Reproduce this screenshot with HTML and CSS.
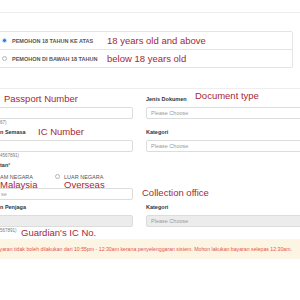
FILE: index.html
```html
<!DOCTYPE html>
<html lang="ms">
<head>
    <meta charset="UTF-8">
    <meta name="viewport" content="width=device-width, initial-scale=1.0">
    <title>Permohonan Pasport</title>
    <link rel="stylesheet" href="styles.css">
</head>

<body>
    <div id="page">
        <div class="topbar"></div>

        <!--jenis pemohon-->
        <div class="choice">
            <label class="opt">
                <span class="radio on"></span>
                <span>PEMOHON 18 TAHUN KE ATAS</span>
                <span class="note">18 years old and above</span>
            </label>
            <label class="opt">
                <span class="radio"></span>
                <span>PEMOHON DI BAWAH 18 TAHUN</span>
                <span class="note">below 18 years old</span>
            </label>
        </div>

        <div class="panel">
            <div class="fields">
                <div class="field left">
                    <label>&nbsp;</label>
                    <div class="input"></div>
                    <div class="hint">67)</div>
                </div>
                <div class="field">
                    <label>Jenis Dokumen</label>
                    <div class="input select">Please Choose</div>
                </div>

                <div class="field left">
                    <label>n Semasa</label>
                    <div class="input"></div>
                    <div class="hint">4567891)</div>
                </div>
                <div class="field">
                    <label>Kategori</label>
                    <div class="input select">Please Choose</div>
                </div>

                <div class="field left place">
                    <label>tan<span class="req">*</span></label>
                    <div class="radios">
                        <span class="ropt first">AM NEGARA</span>
                        <span class="ropt"><span class="radio"></span>LUAR NEGARA</span>
                    </div>
                    <div class="input select">se</div>
                </div>
                <div class="field"></div>

                <div class="field left">
                    <label>n Penjaga</label>
                    <div class="input disabled"></div>
                    <div class="hint">567891)</div>
                </div>
                <div class="field">
                    <label>Kategori</label>
                    <div class="input select disabled">Please Choose</div>
                </div>
            </div>
        </div>

        <div class="alert">
            <span>Pembayaran tidak boleh dilakukan dari 10:55pm - 12:30am kerana penyelenggaran sistem. Mohon lakukan bayaran selepas 12:30am.</span>
        </div>

        <!-- annotations -->
        <span class="note tag passport">Passport Number</span>
        <span class="note tag doctype">Document type</span>
        <span class="note tag icno">IC Number</span>
        <span class="note tag malaysia">Malaysia</span>
        <span class="note tag overseas">Overseas</span>
        <span class="note tag office">Collection office</span>
        <span class="note tag guardian">Guardian's IC No.</span>
    </div>
</body>
</html>
```

FILE: styles.css
```css
body {
    margin: 0;
    background-color: #fff;
    font-family: "Liberation Sans", Arial, sans-serif;
    color: #444;
    overflow: hidden;
}
#page {
    position: relative;
    width: 440px;
}
.topbar {
    height: 12px;
    border-bottom: 1px solid #eee;
}
.choice {
    box-sizing: border-box;
    width: 298px;
    margin: 18px 0 0 -5px;
    border: 1px solid #e4e4e4;
    border-radius: 2px;
}
.opt {
    display: grid;
    grid-template-columns: 5px 90px auto;
    column-gap: 5px;
    align-items: center;
    height: 17px;
    padding-left: 6px;
    font-size: 5.5px;
    font-weight: bold;
    color: #555;
}
.opt + .opt {
    border-top: 1px solid #e4e4e4;
}
.radio {
    display: inline-block;
    box-sizing: border-box;
    width: 5px;
    height: 5px;
    border: 1px solid #b5b5b5;
    border-radius: 50%;
    background-color: #fff;
}
.radio.on {
    border-color: #cfe0f7;
    background-color: #2a7be4;
}
.note {
    font-family: "Liberation Sans", Arial, sans-serif;
    font-size: 9.5px;
    font-weight: normal;
    line-height: 10px;
    color: #a62639;
    white-space: nowrap;
}
.panel {
    margin-top: 20px;
    border-top: 1px solid #eee;
    padding-top: 7px;
}
.fields {
    display: grid;
    grid-template-columns: 133px 281px;
    column-gap: 13px;
    row-gap: 2px;
}
.field label {
    display: block;
    font-size: 5.5px;
    line-height: 7px;
    margin-bottom: 4px;
    color: #333;
    font-weight: bold;
}
.input {
    box-sizing: border-box;
    display: flex;
    align-items: center;
    height: 12px;
    padding: 0 4px;
    border: 1px solid #dcdcdc;
    border-radius: 2px;
    font-size: 5.5px;
    color: #9a9a9a;
    background-color: #fff;
}
.left .input {
    margin-left: -4px;
}
.input.disabled {
    background-color: #ececec;
}
.hint {
    font-size: 4.5px;
    line-height: 8px;
    color: #777;
}
.req {
    color: #d9534f;
}
.place {
    padding-bottom: 2px;
}
.radios {
    display: flex;
    align-items: center;
    height: 7px;
    margin-bottom: 8px;
    font-size: 5.5px;
    color: #555;
}
.ropt {
    display: flex;
    align-items: center;
    gap: 4px;
}
.ropt.first {
    width: 55px;
}
.alert {
    display: flex;
    justify-content: flex-end;
    box-sizing: border-box;
    width: 300px;
    height: 20px;
    margin-top: 4px;
    padding-right: 8px;
    align-items: center;
    overflow: hidden;
    background-color: #fdf5e3;
    color: #e8524a;
    font-size: 5.2px;
}
.alert span {
    flex-shrink: 0;
    white-space: nowrap;
}
/* label overlays */
.tag {
    position: absolute;
}
.passport { left: 4px; top: 94px; }
.doctype { left: 195px; top: 91px; }
.icno { left: 38px; top: 127px; }
.malaysia { left: 0; top: 180px; }
.overseas { left: 64px; top: 180px; }
.office { left: 142px; top: 188px; }
.guardian { left: 21px; top: 228px; }
```
